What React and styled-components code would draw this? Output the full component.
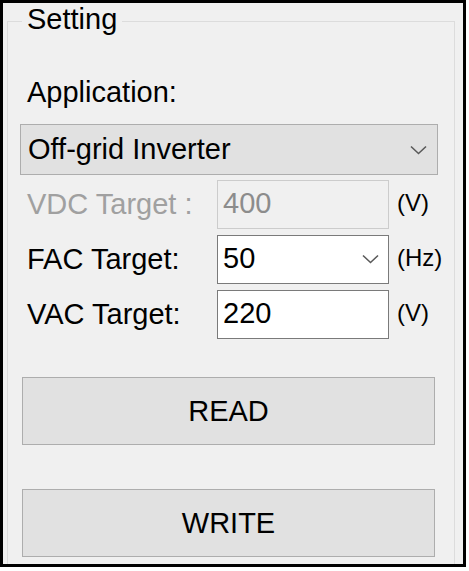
import { Fragment } from "react";
import styled, { createGlobalStyle } from "styled-components";

const Global = createGlobalStyle`
  html, body {
    margin: 0;
    padding: 0;
    background: #ffffff;
  }
  * {
    box-sizing: border-box;
  }
`;

const Frame = styled.div`
  width: 466px;
  height: 567px;
  border: 3px solid #000;
  background: #f0f0f0;
  padding: 0 8px 0 4px;
  overflow: hidden;
  font-family: "Liberation Sans", Arial, sans-serif;
  color: #000;
`;

const Group = styled.fieldset`
  margin: 0;
  padding: 0;
  height: 640px;
  border: 1px solid #dcdcdc;
`;

const Legend = styled.legend`
  margin-left: 14px;
  padding: 0 5px 4px;
  font-size: 29px;
  line-height: 33px;
`;

const Body = styled.div`
  padding: 36px 0 0 12px;
  display: flex;
  flex-direction: column;
`;

const Label = styled.div`
  padding-left: 7px;
  font-size: 29px;
  line-height: 33px;
  color: ${(p) => (p.$disabled ? "#a0a0a0" : "#000")};
  white-space: nowrap;
`;

const Combo = styled.div`
  margin-top: 15px;
  width: 418px;
  height: 51px;
  border: 1px solid #adadad;
  background: #e1e1e1;
  display: flex;
  align-items: center;
  justify-content: space-between;
  padding: 0 10px 0 7px;
  font-size: 29px;
  line-height: 33px;
`;

const Rows = styled.div`
  margin-top: 5px;
  display: grid;
  grid-template-columns: 197px 172px auto;
  grid-auto-rows: 49px;
  row-gap: 6px;
  align-items: center;
`;

const Field = styled.div`
  height: 100%;
  border: 1px solid ${(p) => (p.$disabled ? "#cccccc" : "#7a7a7a")};
  background: ${(p) => (p.$disabled ? "#f0f0f0" : "#ffffff")};
  color: ${(p) => (p.$disabled ? "#8c8c8c" : "#000")};
  display: flex;
  align-items: center;
  justify-content: space-between;
  padding: 0 9px 2px 5px;
  font-size: 29px;
  line-height: 33px;
`;

const Unit = styled.div`
  padding-left: 8px;
  font-size: 24px;
  line-height: 28px;
  margin-bottom: 4px;
`;

const Button = styled.button`
  display: block;
  margin: ${(p) => p.$gap}px 0 0 2px;
  width: 413px;
  height: 68px;
  border: 1px solid #adadad;
  background: #e1e1e1;
  font-family: inherit;
  font-size: 29px;
  color: #000;
  padding: 0;
`;

const Chevron = () => (
  <svg width="17" height="10" viewBox="0 0 17 10">
    <path d="M1 1.5 L8.5 8.5 L16 1.5" fill="none" stroke="#5a5a5a" strokeWidth="1.6" />
  </svg>
);

const rows = [
  { label: "VDC Target :", value: "400", unit: "(V)", disabled: true },
  { label: "FAC Target:", value: "50", unit: "(Hz)", drop: true },
  { label: "VAC Target:", value: "220", unit: "(V)" },
];

export default function App() {
  return (
    <>
      <Global />
      <Frame>
        <Group>
          <Legend>Setting</Legend>
          <Body>
            <Label>Application:</Label>
            <Combo>
              <span>Off-grid Inverter</span>
              <Chevron />
            </Combo>
            <Rows>
              {rows.map((r) => (
                <Fragment key={r.label}>
                  <Label $disabled={r.disabled}>{r.label}</Label>
                  <Field $disabled={r.disabled}>
                    <span>{r.value}</span>
                    {r.drop && <Chevron />}
                  </Field>
                  <Unit>{r.unit}</Unit>
                </Fragment>
              ))}
            </Rows>
            <Button $gap={38}>READ</Button>
            <Button $gap={44}>WRITE</Button>
          </Body>
        </Group>
      </Frame>
    </>
  );
}
